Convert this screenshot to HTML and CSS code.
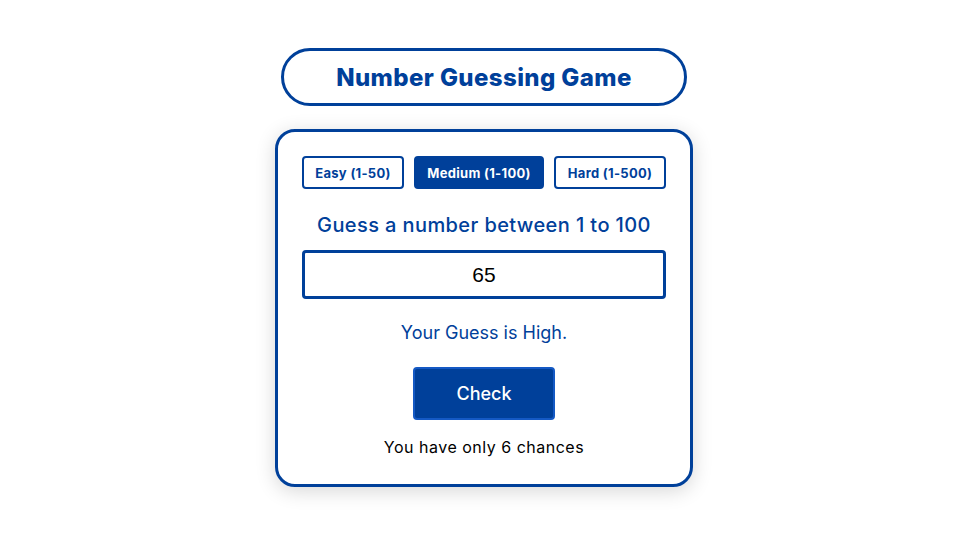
FILE: index.html
```html
<!DOCTYPE html>
<html lang="en">
<head>
    <meta charset="UTF-8">
    <meta name="viewport" content="width=device-width, initial-scale=1.0">
    <title>Number Guessing Game</title>
    <link rel="stylesheet" href="styles.css">
</head>
<body>
    <div class="wrapper">
        <h1 class="title">Number Guessing Game</h1>
        <div class="card">
            <div class="levels">
                <button class="level">Easy (1-50)</button>
                <button class="level active">Medium (1-100)</button>
                <button class="level">Hard (1-500)</button>
            </div>
            <p class="prompt">Guess a number between 1 to 100</p>
            <input type="number" class="guess" value="65">
            <p class="result">Your Guess is High.</p>
            <button class="check">Check</button>
            <p class="chances">You have only 6 chances</p>
        </div>
    </div>
</body>
</html>
```

FILE: styles.css
```css
body {
    margin: 0;
    background: #fff;
    font-family: Inter, "Open Sans", sans-serif;
    color: #00409a;
}
.wrapper {
    box-sizing: border-box;
    min-height: 100vh;
    display: flex;
    flex-direction: column;
    align-items: center;
    padding: 48px 0 0 8px;
}
.title {
    box-sizing: border-box;
    width: 406px;
    height: 58px;
    margin: 0 0 23px;
    border: 3px solid #00409a;
    border-radius: 30px;
    display: flex;
    align-items: center;
    justify-content: center;
    font-size: 24px;
    font-weight: 800;
    letter-spacing: 0.4px;
}
.card {
    box-sizing: border-box;
    width: 418px;
    padding: 24px 24px 25px;
    border: 3px solid #00409a;
    border-radius: 20px;
    box-shadow: 0 4px 20px rgba(0, 0, 0, 0.16);
    display: flex;
    flex-direction: column;
    align-items: center;
}
.levels {
    display: flex;
    gap: 10px;
    width: 100%;
}
.level {
    height: 33px;
    padding: 0 8px;
    border: 2px solid #00409a;
    border-radius: 4px;
    background: #fff;
    color: #00409a;
    font-family: inherit;
    font-size: 13px;
    font-weight: 700;
    letter-spacing: 0.3px;
}
.level:first-child { width: 102px; }
.level.active {
    width: 130px;
    background: #00409a;
    color: #fff;
}
.level:last-child { width: 112px; }
.prompt {
    margin: 22px 0 11px;
    font-size: 20px;
    line-height: 28px;
    font-weight: 500;
    letter-spacing: 0.4px;
}
.guess {
    box-sizing: border-box;
    width: 100%;
    height: 49px;
    padding: 0;
    border: 3px solid #00409a;
    border-radius: 4px;
    text-align: center;
    font-family: "Liberation Sans", Arial, sans-serif;
    font-size: 21px;
    color: #000;
    -moz-appearance: textfield;
}
.guess::-webkit-inner-spin-button,
.guess::-webkit-outer-spin-button {
    -webkit-appearance: none;
    margin: 0;
}
.result {
    margin: 21px 0 21px;
    font-size: 18px;
    line-height: 26px;
}
.check {
    width: 142px;
    height: 53px;
    border: 2px solid #1459c4;
    border-radius: 4px;
    background: #00409a;
    color: #fff;
    font-family: inherit;
    font-size: 18px;
    font-weight: 500;
}
.chances {
    margin: 15px 0 0;
    font-size: 16px;
    line-height: 24px;
    letter-spacing: 0.5px;
    color: #000;
}
```
